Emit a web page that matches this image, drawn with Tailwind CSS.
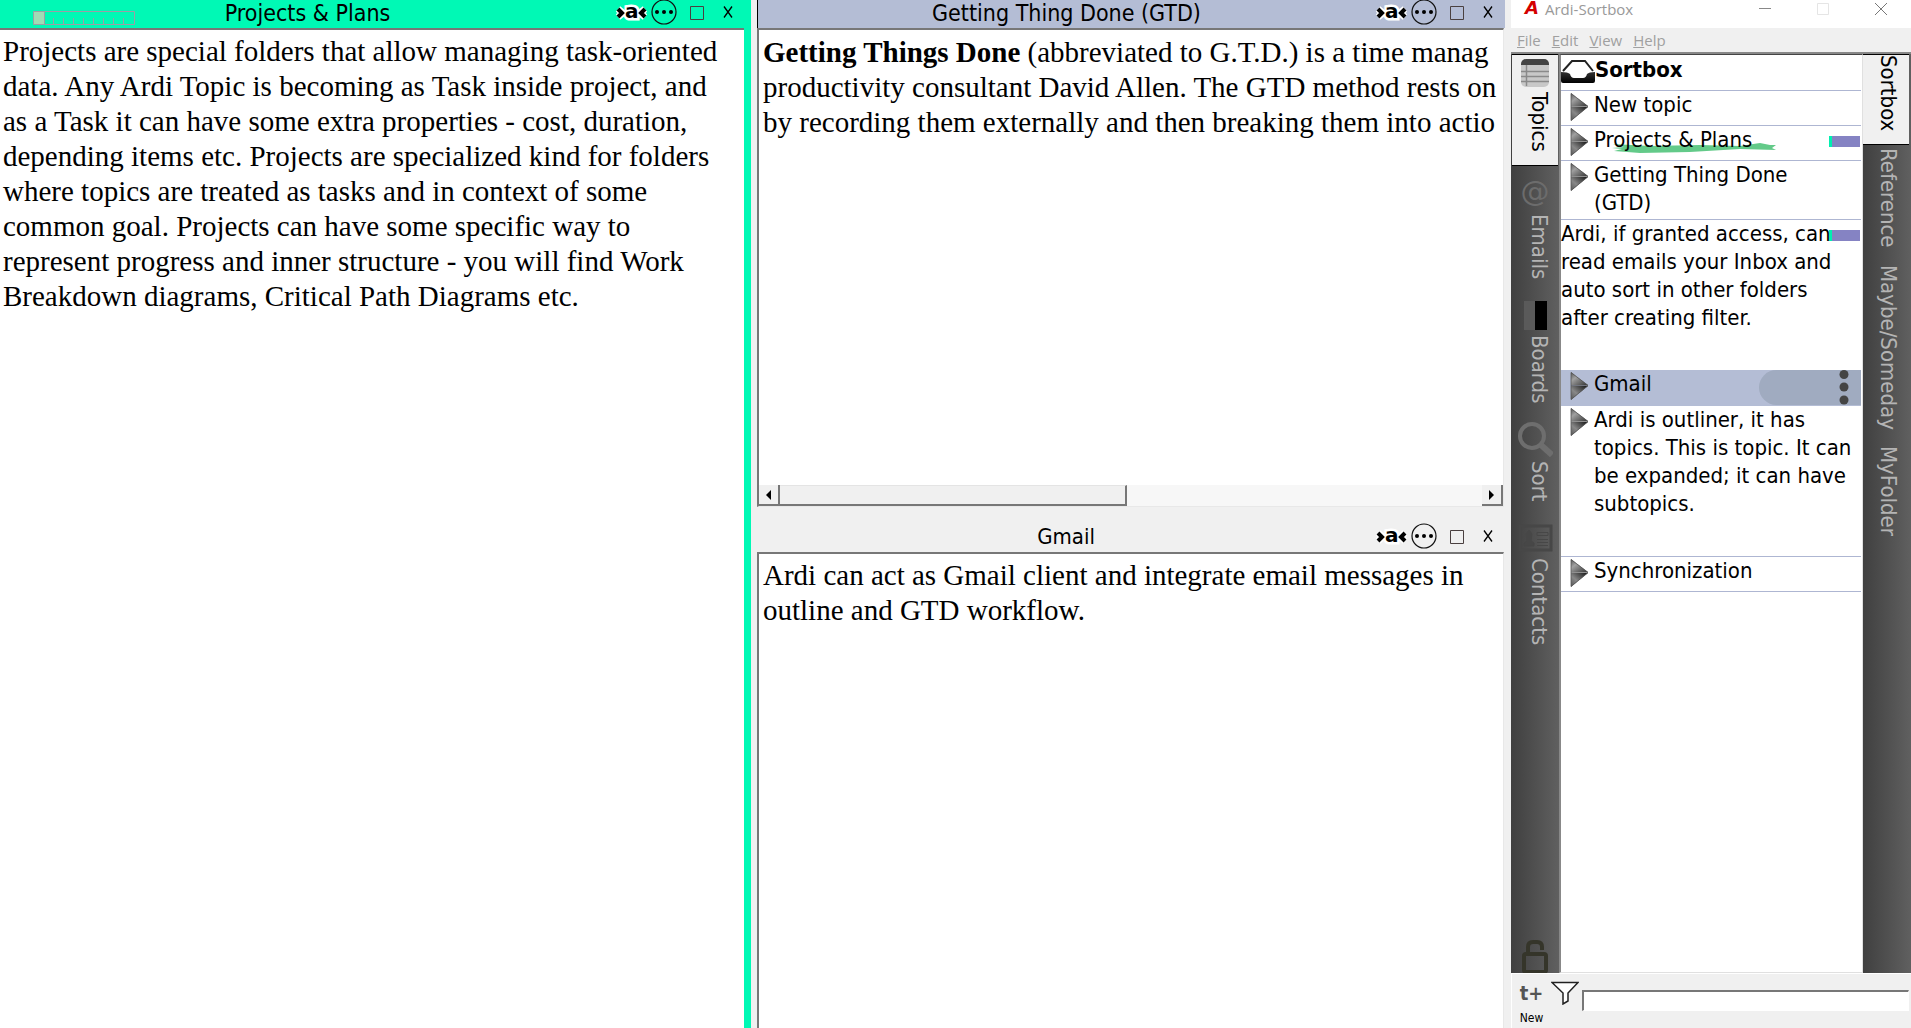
<!DOCTYPE html>
<html lang="en">
<head>
<meta charset="utf-8">
<title>Ardi-Sortbox</title>
<script src="https://cdn.jsdelivr.net/npm/@tailwindcss/browser@4"></script>
</head>
<body class="h-screen overflow-hidden bg-[#f0f0f0] text-black">
<svg width="0" height="0" class="absolute" aria-hidden="true">
  <defs>
    <linearGradient id="up" x1="0" y1="0" x2="1" y2="1"><stop offset="0" stop-color="#555"/><stop offset=".35" stop-color="#a0a0a0"/><stop offset="1" stop-color="#333"/></linearGradient>
    <linearGradient id="down" x1="1" y1="0" x2="0" y2="1"><stop offset="0" stop-color="#111"/><stop offset=".6" stop-color="#888"/><stop offset="1" stop-color="#555"/></linearGradient>
    <linearGradient id="tray" x1="0" y1="0" x2="0" y2="1"><stop offset="0" stop-color="#333"/><stop offset="1" stop-color="#000"/></linearGradient>
    <symbol id="arrow" viewBox="0 0 19 28"><path d="M1 0 18 13H1z" fill="url(#up)"/><path d="M1 14H18L1 28z" fill="url(#down)"/><path d="M1 13.5H18" stroke="#444" stroke-width=".6"/><path d="M1 .5 18 13.5 1 27.500z" fill="none" stroke="#555" stroke-width=".8"/></symbol>
    <symbol id="brand" viewBox="0 0 33 20">
      <path d="M3 7l5 4-5 4M30 7l-5 4 5 4" fill="none" stroke="#fff" stroke-width="7"/>
      <text x="10" y="16" font-family="DejaVu Sans" font-weight="700" font-size="20" fill="#000" stroke="#fff" stroke-width="5" paint-order="stroke">a</text>
      <path d="M3 7l4 4-4 4M30 7l-4 4 4 4" fill="none" stroke="#000" stroke-width="4"/>
    </symbol>
    <symbol id="more" viewBox="0 0 26 26"><circle cx="13" cy="13" r="12" fill="none" stroke="#111" stroke-width="1.200"/><circle cx="6" cy="13" r="2"/><circle cx="13" cy="13" r="2"/><circle cx="20" cy="13" r="2"/></symbol>
    <symbol id="box" viewBox="0 0 16 16"><path d="M1.500 1.500h13v13h-13z" fill="none" stroke="#4a4040"/></symbol>
    <symbol id="x" viewBox="0 0 10 14"><path d="M1 1.500 9 12.500M9 1.500 1 12.500" fill="none" stroke="#000" stroke-width="1.300"/></symbol>
  </defs>
</svg>
<div class="grid h-full grid-cols-[minmax(0,751fr)_minmax(0,760fr)_400px]">

  <section class="flex flex-col bg-[#00f9b5] pr-[6px]">
    <header class="relative flex h-7 shrink-0 items-start">
      <svg class="absolute left-8 top-[11px]" width="104" height="14" fill="none" stroke="#9d9da5"><path fill="#9fdcb5" d="M1.500.5h11v13h-11z"/><path d="M12.500.5h90v13h-90zM21.500 7v6M31.500 7v6M41.500 7v6M51.500 7v6M61.500 7v6M71.500 7v6M81.500 7v6M91.500 7v6"/></svg>
      <h2 class="flex-1 text-center font-['DejaVu_Sans_Condensed','DejaVu_Sans',sans-serif] text-[23px] leading-[26px]">Projects &amp; Plans</h2>
      <div class="flex h-6 items-center pr-3">
        <button aria-label="Ardi"><svg width="33" height="20"><use href="#brand"/></svg></button>
        <button aria-label="More" class="ml-[3px]"><svg width="26" height="26"><use href="#more"/></svg></button>
        <button aria-label="Maximize" class="ml-3 pt-0.5"><svg width="16" height="16"><use href="#box"/></svg></button>
        <button aria-label="Close" class="ml-[18px]"><svg width="10" height="14"><use href="#x"/></svg></button>
      </div>
    </header>
    <div class="mr-px flex-1 border-t-2 border-[#777] bg-white pl-[3px] pt-1 font-['Liberation_Serif',serif] text-[29px] leading-[35px] whitespace-nowrap">
      <p>Projects are special folders that allow managing task-oriented<br>data. Any Ardi Topic is becoming as Task inside project, and<br>as a Task it can have some extra properties - cost, duration,<br>depending items etc. Projects are specialized kind for folders<br>where topics are treated as tasks and in context of some<br>common goal. Projects can have some specific way to<br>represent progress and inner structure - you will find Work<br>Breakdown diagrams, Critical Path Diagrams etc.</p>
    </div>
  </section>

  <div class="flex min-w-0 flex-col gap-[17px] px-[6px]">
    <section class="flex min-h-0 flex-[507] flex-col">
      <header class="flex h-7 shrink-0 items-start border-l border-black bg-[#b4bdd5]">
        <h2 class="flex-1 text-center font-['DejaVu_Sans_Condensed','DejaVu_Sans',sans-serif] text-[23px] leading-[26px]">Getting Thing Done (GTD)</h2>
        <div class="flex h-6 items-center pr-3">
          <button aria-label="Ardi"><svg width="33" height="20"><use href="#brand"/></svg></button>
          <button aria-label="More" class="ml-[3px]"><svg width="26" height="26"><use href="#more"/></svg></button>
          <button aria-label="Maximize" class="ml-3 pt-0.5"><svg width="16" height="16"><use href="#box"/></svg></button>
          <button aria-label="Close" class="ml-[18px]"><svg width="10" height="14"><use href="#x"/></svg></button>
        </div>
      </header>
      <div class="mr-px flex min-h-0 flex-1 flex-col border-t-2 border-r border-b border-l-2 border-t-[#777] border-r-[#e8e8e8] border-b-[#e8e8e8] border-l-[#777] bg-white">
        <p class="flex-1 overflow-hidden pl-1 pt-[5px] font-['Liberation_Serif',serif] text-[29px] leading-[35px] whitespace-nowrap"><b>Getting Things Done</b> (abbreviated to G.T.D.) is a time manag<br>productivity consultant David Allen. The GTD method rests on<br>by recording them externally and then breaking them into actio</p>
        <div class="flex h-[21px] shrink-0 bg-[#f7f7f7]">
          <button aria-label="Scroll left" class="flex w-[21px] items-center justify-center border-r-2 border-b-2 border-[#777] bg-[#f0f0f0]"><svg width="5" height="10"><path d="M5 0v10L0 5z"/></svg></button>
          <div class="w-[347px] border-t border-r-2 border-b-2 border-t-[#e4e4e4] border-r-[#777] border-b-[#777] bg-[#f0f0f0]"></div>
          <button aria-label="Scroll right" class="ml-auto flex w-[21px] items-center justify-center border-r-2 border-b-2 border-[#777] bg-[#f0f0f0]"><svg width="5" height="10"><path d="M0 0v10l5-5z"/></svg></button>
        </div>
      </div>
    </section>
    <section class="flex min-h-0 flex-[504] flex-col">
      <header class="flex h-7 shrink-0 items-start">
        <h2 class="flex-1 text-center font-['DejaVu_Sans_Condensed','DejaVu_Sans',sans-serif] text-[22px] leading-[26px]">Gmail</h2>
        <div class="flex h-6 items-center pr-3">
          <button aria-label="Ardi"><svg width="33" height="20"><use href="#brand"/></svg></button>
          <button aria-label="More" class="ml-[3px]"><svg width="26" height="26"><use href="#more"/></svg></button>
          <button aria-label="Maximize" class="ml-3 pt-0.5"><svg width="16" height="16"><use href="#box"/></svg></button>
          <button aria-label="Close" class="ml-[18px]"><svg width="10" height="14"><use href="#x"/></svg></button>
        </div>
      </header>
      <div class="mr-px flex-1 border-t-2 border-r border-l-2 border-t-[#777] border-r-[#e8e8e8] border-l-[#777] bg-white pl-1 pt-1 font-['Liberation_Serif',serif] text-[29px] leading-[35px] whitespace-nowrap">
        <p>Ardi can act as Gmail client and integrate email messages in<br>outline and GTD workflow.</p>
      </div>
    </section>
  </div>

  <aside class="flex min-h-0 flex-col">
    <header class="flex h-7 shrink-0 items-start bg-white pl-[14px] font-['Open_Sans',sans-serif] text-[15px] text-[#999]">
      <span class="w-5 font-['DejaVu_Sans',sans-serif] text-[18px] leading-[16px] font-bold text-[#d40000] italic">A</span>
      <h1 class="flex-1 leading-[18px]">Ardi-Sortbox</h1>
      <div class="flex items-start gap-[46px] pr-6 pt-[3px]">
        <button aria-label="Minimize"><svg width="12" height="12"><path d="M0 5.500h12" stroke="#888"/></svg></button>
        <button aria-label="Maximize"><svg width="12" height="12"><path d="M.5.500h11v11H.5z" fill="none" stroke="#e5e5e5"/></svg></button>
        <button aria-label="Close"><svg width="12" height="12"><path d="M0 0 12 12M12 0 0 12" stroke="#777"/></svg></button>
      </div>
    </header>
    <nav class="flex h-6 shrink-0 gap-[11px] pl-[6px] font-['Open_Sans',sans-serif] text-[15px] leading-[25px] text-[#a0a0a0]">
      <a href="#" class="first-letter:underline">File</a><a href="#" class="first-letter:underline">Edit</a><a href="#" class="first-letter:underline">View</a><a href="#" class="first-letter:underline">Help</a>
    </nav>
    <div class="flex min-h-0 flex-1 border-t-2 border-[#888]">
      <nav class="flex w-12 shrink-0 flex-col bg-linear-to-r from-[#404040] to-[#606060] font-['DejaVu_Sans_Condensed','DejaVu_Sans',sans-serif] text-[22px] text-[#b4b4b4]">
        <button class="mx-px flex h-[112px] flex-col items-center gap-1 border-y border-black bg-[#f0f0f0] pt-[3px] text-black">
          <svg width="30" height="30" class="shrink-0"><rect x="1" y="1" width="28" height="28" rx="5" fill="#c8c8c8"/><path d="M1 7V6a5 5 0 0 1 5-5h18a5 5 0 0 1 5 5v1z" fill="#444"/><path d="M1 13.500h28M1 18.500h28M1 23.500h28M6.500 7v21" stroke="#8a8a8a" stroke-width="1.500"/></svg>
          <span class="pl-2 leading-6 [writing-mode:vertical-rl]">Topics</span>
        </button>
        <button class="flex h-[124px] flex-col items-center gap-1 pt-2">
          <span class="h-9 w-9 text-center font-['DejaVu_Sans',sans-serif] text-[29px] leading-[34px] text-[#6c6c6c]">@</span>
          <span class="pl-2 leading-6 [writing-mode:vertical-rl]">Emails</span>
        </button>
        <button class="flex h-[121px] flex-col items-center gap-1 pt-[10px]">
          <svg width="24" height="31"><path d="M1 1h12v29H1z" fill="#5a5a5a"/><path d="M12 1h12v29H12z" fill="#000"/></svg>
          <span class="pl-2 leading-6 [writing-mode:vertical-rl]">Boards</span>
        </button>
        <button class="flex h-[103px] flex-col items-center gap-1 pt-2.5">
          <svg width="36" height="36" fill="none" stroke="#6e6e6e"><circle cx="15" cy="15" r="12" stroke-width="4"/><path d="m24 24 11 10" stroke-width="6"/></svg>
          <span class="pl-2 leading-6 [writing-mode:vertical-rl]">Sort</span>
        </button>
        <button class="flex flex-col items-center gap-[6px] pt-2.5">
          <svg width="36" height="28" fill="none" stroke="#474747"><path d="M3 2h31v24H3z" stroke-width="3"/><path d="M20 8.500h11v3H20zM20 15.500h11M20 18.500h11M20 21.500h11"/><path d="M7 22v-3l3-2-1-7 3-4 3 4-1 7 3 2v3z" fill="#474747"/></svg>
          <span class="pl-2 leading-6 [writing-mode:vertical-rl]">Contacts</span>
        </button>
        <button aria-label="Lock" class="mt-auto self-center"><svg width="26" height="33" class="block" fill="none" stroke="#35352a"><rect x="2" y="14" width="22" height="18" rx="2" stroke-width="4"/><path d="M6 14V7q0-5 5-5h4q5 0 5 5v3" stroke-width="4"/></svg></button>
      </nav>
      <main class="min-w-0 flex-1 border-t border-r border-b border-l-2 border-t-[#444] border-r-[#e0e0e0] border-b-[#e0e0e0] border-l-[#888] bg-white pr-px font-['DejaVu_Sans_Condensed','DejaVu_Sans',sans-serif] text-[22px] leading-7 whitespace-nowrap">
        <ul>
          <li class="flex h-9 border-b border-[#aeb6d2] leading-[30px] font-bold">
            <svg width="34" height="30"><path d="M2 16 11 6h13l8 10" fill="#fff" stroke="#222" stroke-width="2"/><path d="M0 17q7 0 9 2 1 4 4 4h9q3 0 4-4 2-2 8-2v9q0 2-2 2H2q-2 0-2-2z" fill="url(#tray)"/></svg>Sortbox</li>
          <li class="flex h-[35px] border-b border-[#aeb6d2]"><svg class="mt-[2px] mr-[5px] ml-[9px]" width="19" height="28"><use href="#arrow"/></svg>New topic</li>
          <li class="relative flex h-[35px] border-b border-[#aeb6d2]"><svg class="mt-[2px] mr-[5px] ml-[9px]" width="19" height="28"><use href="#arrow"/></svg>
            <svg class="absolute left-[49px] top-[16px]" width="168" height="12"><path d="M3 2 40 4 90 3 130 4 150 1 160 3 166 3 162 6 166 8 130 7 80 10 30 11 4 9 12 7 2 6 14 5z" fill="#2fb862" opacity=".75"/></svg>
            <span class="relative">Projects &amp; Plans</span>
            <span class="absolute right-px top-[10px] h-[11px] w-[31px] border-l-3 border-[#00f0b0] bg-[#8583c3]"></span></li>
          <li class="flex h-[59px] border-b border-[#aeb6d2]"><svg class="mt-[2px] mr-[5px] ml-[9px]" width="19" height="28"><use href="#arrow"/></svg><span>Getting Thing Done<br>(GTD)</span></li>
          <li class="relative h-[150px]">Ardi, if granted access, can<br>read emails your Inbox and<br>auto sort in other folders<br>after creating filter.
            <span class="absolute right-px top-[10px] h-[11px] w-[31px] border-l-3 border-[#00f0b0] bg-[#8583c3]"></span></li>
          <li class="flex h-9 bg-[#b4bdd5]"><svg class="mt-[2px] mr-[5px] ml-[9px]" width="19" height="28"><use href="#arrow"/></svg>Gmail
            <button aria-label="Topic menu" class="ml-auto flex h-[35px] w-[102px] justify-end rounded-l-full bg-[#a0abc0] pr-3"><svg width="10" height="35" fill="#444"><circle cx="5" cy="4.500" r="4.500"/><circle cx="5" cy="17" r="4.500"/><circle cx="5" cy="30" r="4.500"/></svg></button></li>
          <li class="flex h-[151px] border-b border-[#aeb6d2]"><svg class="mt-[2px] mr-[5px] ml-[9px]" width="19" height="28"><use href="#arrow"/></svg><span>Ardi is outliner, it has<br>topics. This is topic. It can<br>be expanded; it can have<br>subtopics.</span></li>
          <li class="flex h-[35px] border-b border-[#aeb6d2]"><svg class="mt-[2px] mr-[5px] ml-[9px]" width="19" height="28"><use href="#arrow"/></svg>Synchronization</li>
        </ul>
      </main>
      <nav class="flex w-12 shrink-0 flex-col items-start gap-[17px] bg-linear-to-r from-[#404040] to-[#606060] font-['DejaVu_Sans_Condensed','DejaVu_Sans',sans-serif] text-[22px] leading-6 text-[#b4b4b4]">
        <button class="-mb-[14px] flex h-[91px] w-[46px] items-start justify-center border-y border-black bg-[#f0f0f0] pl-1 text-black"><span class="[writing-mode:vertical-rl]">Sortbox</span></button>
        <button class="pl-[13px] [writing-mode:vertical-rl]">Reference</button>
        <button class="pl-[13px] [writing-mode:vertical-rl]">Maybe/Someday</button>
        <button class="pl-[13px] [writing-mode:vertical-rl]">MyFolder</button>
      </nav>
    </div>
    <footer class="flex h-[55px] shrink-0 border-t border-l border-white pr-[2px]">
      <button class="w-[39px] pt-[6px] font-['DejaVu_Sans_Condensed','DejaVu_Sans',sans-serif] text-xs leading-5"><b class="block h-[28px] text-[20px] leading-[26px] text-[#555]">t+</b>New</button>
      <button aria-label="Filter" class="self-start pt-[7px]"><svg width="28" height="24" fill="#fff" stroke="#222" stroke-width="1.500"><path d="M1 1.500h26L17 12v8l-5 3V12z"/></svg></button>
      <input aria-label="Filter text" class="mt-4 ml-[3px] h-[21px] min-w-0 flex-1 border-t-2 border-r border-b border-l-2 border-t-[#777] border-r-white border-b-white border-l-[#777] bg-white px-1 text-sm outline-none">
    </footer>
  </aside>
</div>
</body>
</html>
